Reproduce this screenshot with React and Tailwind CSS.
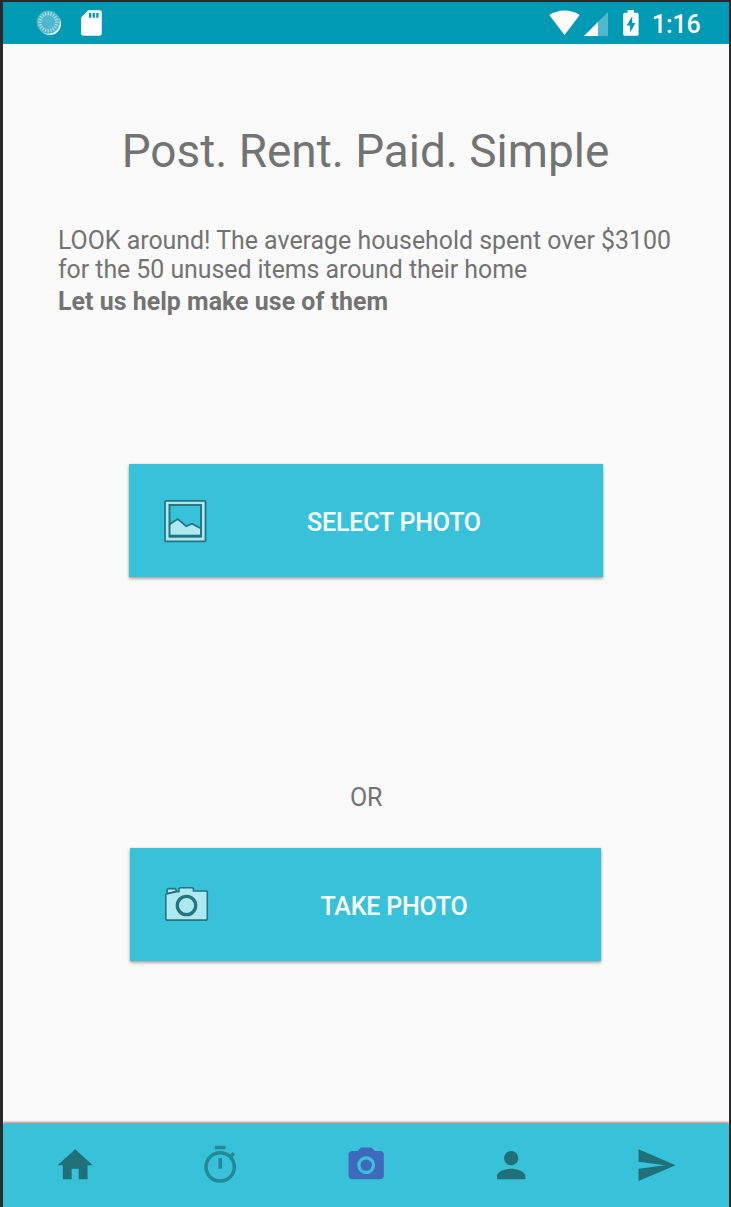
import React from "react";

const TICKS = Array.from({ length: 20 }, (_, i) => i * 18);

function StatusBar() {
  return (
    <header className="flex h-[42px] shrink-0 items-center bg-[#009ab4] pr-[28px] pl-[33px] text-white">
      <svg className="size-[26px] shrink-0" viewBox="0 0 26 26">
        <circle cx="13.8" cy="13.8" r="11.2" fill="#fff" />
        <circle cx="12.3" cy="12.2" r="11.6" fill="#4fb8ca" />
        {TICKS.map((a) => (
          <path key={a} d="M12.3 1.8v3.6" stroke="#a4dae4" strokeWidth="1.3" transform={`rotate(${a} 12.3 12.2)`} />
        ))}
      </svg>
      <svg className="ml-[19px] h-[26px] w-[21px] shrink-0" viewBox="0 0 21 26" fill="#fff">
        <path
          fillRule="evenodd"
          d="M7.3 0.2H18.4A2.4 2.4 0 0 1 20.8 2.6V23.4A2.4 2.4 0 0 1 18.4 25.8H2.5A2.4 2.4 0 0 1 .1 23.4V7.4ZM8 3v4.8h2.3V3ZM11.6 3v4.8h2.3V3ZM15.2 3v4.8h2.3V3Z"
        />
      </svg>
      <svg className="ml-auto h-[26px] w-[31px] shrink-0" viewBox="0 0 31 26">
        <path d="M.3 5.1C9-1.1 22-1.1 30.7 5.1L15.5 25Z" fill="#fff" />
      </svg>
      <svg className="mt-[1px] ml-[4px] h-[24px] w-[25px] shrink-0" viewBox="0 0 25 24">
        <path d="M0 24 24 0V24Z" fill="#4fb8ca" />
        <path d="M0 24 14 10V24Z" fill="#fff" />
      </svg>
      <svg className="ml-[14px] h-[26px] w-[16px] shrink-0" viewBox="0 0 16 26">
        <path
          fillRule="evenodd"
          d="M4.6.1h6.3v2.7h3.2a1.5 1.5 0 0 1 1.5 1.5v19.9a1.5 1.5 0 0 1-1.5 1.5H1.7a1.5 1.5 0 0 1-1.5-1.5V4.3a1.5 1.5 0 0 1 1.5-1.5h2.9ZM9.2 6.2 3.6 15.6h3.5v7l5.4-9.6H9.2Z"
          fill="#fff"
        />
      </svg>
      <span className="mt-[3px] ml-[13px] w-[49px] text-[25px] leading-[30px] font-medium tracking-[-0.2px] whitespace-nowrap">1:16</span>
    </header>
  );
}

function GalleryIcon() {
  return (
    <svg className="mt-px size-[44px]" viewBox="0 0 44 44">
      <path
        fillRule="evenodd"
        d="M2.2 1.2H41.7V42.2H2.2ZM6.5 5.5V38.2H37V5.5Z"
        fill="#aee8f0"
      />
      <rect x="2" y="1.8" width="40.6" height="40.6" rx="1" fill="none" stroke="#24757f" strokeWidth="1.7" />
      <path d="M6.7 25.3 14.8 20 23.2 27.2 29 24.7 37.5 29.3V36.8H6.7Z" fill="#aee8f0" />
      <path d="M6.7 25.3 14.8 20 23.2 27.2 29 24.7 37.5 29.3" fill="none" stroke="#24757f" strokeWidth="1.7" />
      <path d="M6.5 6.1H38V37.5H6.5Z" fill="none" stroke="#24757f" strokeWidth="2" />
      <path d="M6.5 37H38" stroke="#24757f" strokeWidth="2.6" />
    </svg>
  );
}

function CameraIcon() {
  return (
    <svg className="h-[36px] w-[45px]" viewBox="0 0 45 36">
      <g fill="#aee8f0" stroke="#24757f" strokeWidth="1.6" strokeLinejoin="round">
        <path d="M3.1 6.2V2.4L4.2 1.6H11.2L12 2.6V4.5L4.8 6.2Z" />
        <path d="M1.8 7.3 12.8 4.6H15V1.5L16.2 .8H28.2L29.4 1.5V4H42.4L43.3 4.9V32.2L42.4 33.1H2.7L1.8 32.2Z" />
        <circle cx="22.5" cy="18.5" r="9.2" strokeWidth="3.3" />
      </g>
    </svg>
  );
}

function PhotoButton({ icon, label, className }) {
  return (
    <button
      className={
        "flex shrink-0 items-center bg-[#37c2da] pr-[22px] pl-[34px] text-white shadow-[0_2px_3px_rgba(0,0,0,0.3),0_0_2px_rgba(0,0,0,0.15)] " +
        className
      }
    >
      {icon}
      <span className="mt-[5px] flex-1 text-center text-[25px] leading-[30px] font-medium tracking-[-0.2px]">{label}</span>
    </button>
  );
}

const NAV = [
  { name: "Home", fill: "#20707a", d: "M10 20v-6h4v6h5v-8h3L12 3 2 12h3v8z" },
  {
    name: "Timer",
    fill: "#248895",
    d: "M15 1H9v2h6V1zm-4 13h2V8h-2v6zm8.03-6.61l1.42-1.42c-.43-.51-.9-.99-1.41-1.41l-1.42 1.42C16.07 4.74 14.12 4 12 4c-4.97 0-9 4.03-9 9s4.02 9 9 9 9-4.03 9-9c0-2.12-.74-4.07-1.97-5.61zM12 20c-3.87 0-7-3.13-7-7s3.13-7 7-7 7 3.13 7 7-3.13 7-7 7z",
  },
  {
    name: "Camera",
    fill: "#3f69bd",
    d: "M9 2L7.17 4H4c-1.1 0-2 .9-2 2v12c0 1.1.9 2 2 2h16c1.1 0 2-.9 2-2V6c0-1.1-.9-2-2-2h-3.17L15 2H9zm3 15c-2.76 0-5-2.24-5-5s2.24-5 5-5 5 2.24 5 5-2.24 5-5 5z",
  },
  {
    name: "Profile",
    fill: "#20707a",
    d: "M12 12c2.21 0 4-1.79 4-4s-1.79-4-4-4-4 1.79-4 4 1.79 4 4 4zm0 2c-2.67 0-8 1.34-8 4v2h16v-2c0-2.66-5.33-4-8-4z",
  },
  { name: "Send", fill: "#20707a", d: "M2 3v7l15 2-15 2v7L23 12z" },
];

function BottomNav() {
  return (
    <nav className="mt-auto grid h-[83px] shrink-0 grid-cols-5 bg-[#37c2da] pt-[19.6px] pr-[0.6px] shadow-[0_-2px_2px_rgba(0,0,0,0.4)]">
      {NAV.map((item) => (
        <button key={item.name} aria-label={item.name} className="flex items-start justify-center">
          <svg className="size-[42.4px]" viewBox="0 0 24 24" fill={item.fill}>
            <path d={item.d} />
            {item.name === "Camera" && <circle cx="12" cy="12" r="3.2" />}
          </svg>
        </button>
      ))}
    </nav>
  );
}

export default function App() {
  return (
    <div className="flex h-[1207px] w-[731px] flex-col overflow-hidden border-t-2 border-r-2 border-l-3 border-[#29292b] bg-[#fafafa] font-[Roboto,sans-serif] text-[#737373]">
      <StatusBar />
      <main className="flex flex-col items-center">
        <h1 className="mt-[80px] mr-[1px] text-[45.9px] leading-[54px] whitespace-nowrap">Post. Rent. Paid. Simple</h1>
        <div className="mt-[48px] w-full pl-[55px] text-[24.9px] leading-[29px] whitespace-nowrap">
          <p>
            LOOK around! The average household spent over $3100
            <br />
            <span className="tracking-[-0.04px]">for the 50 unused items around their home</span>
          </p>
          <p className="mt-[3px] font-bold tracking-[0.04px]">Let us help make use of them</p>
        </div>
        <PhotoButton className="mt-[148px] h-[113px] w-[474px]" icon={<GalleryIcon />} label="SELECT PHOTO" />
        <p className="mt-[206px] text-[25px] leading-[29px] tracking-[-0.2px]">OR</p>
        <PhotoButton className="mt-[36px] mr-[1px] h-[113px] w-[471px]" icon={<CameraIcon />} label="TAKE PHOTO" />
      </main>
      <BottomNav />
    </div>
  );
}
